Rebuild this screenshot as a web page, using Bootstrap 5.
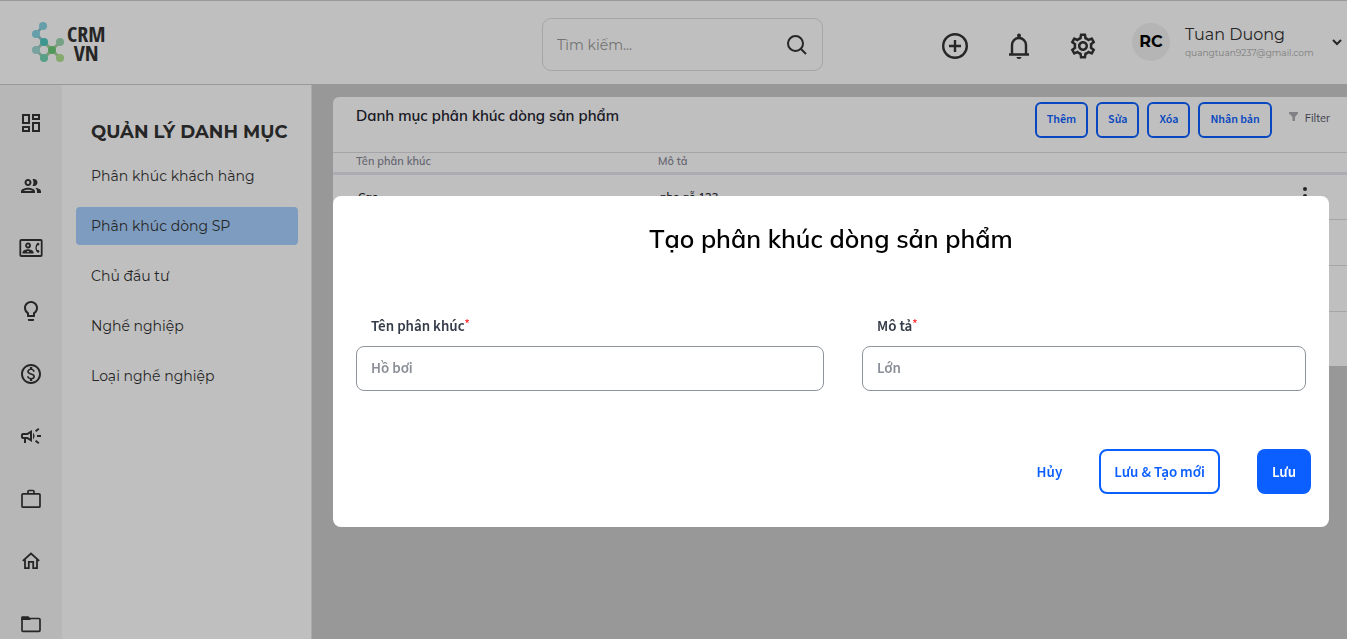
<!DOCTYPE html>
<html lang="vi">
<head>
<meta charset="utf-8">
<meta name="viewport" content="width=device-width, initial-scale=1">
<title>CRM VN</title>
<link href="https://cdn.jsdelivr.net/npm/bootstrap@5.3.0/dist/css/bootstrap.min.css" rel="stylesheet">
<style>
  :root { --ink: #333; --line: #dcdce0; --brand: #0b5fff; --wide: "Montserrat", "Inter", sans-serif; --round: "Mulish", "Nunito", "Open Sans", sans-serif; --form: "Source Sans Pro", "Source Sans 3", "Noto Sans CJK SC", "Noto Sans", sans-serif; }
  body { font-family: var(--wide); color: var(--ink); background: #cbcbcb; }
  svg { display: block; flex: none; }
  .icon-btn { padding: 0; border: 0; background: none; color: var(--ink); }

  /* Top bar */
  .topbar { display: grid; grid-template-columns: 542fr 281px 524fr; height: 85px; background: #fff; border-top: 1px solid #ccc; border-bottom: 1px solid #ccc; }
  .brand { padding: 0 0 2px 31px; gap: 2px; color: var(--ink); }
  .brand-name { font: 700 22px/19px "Open Sans Condensed", "Fira Sans Condensed", "Roboto Condensed", "Open Sans", sans-serif; text-align: center; padding-top: 2px; }
  .search { height: 53px; border: 1px solid #dedede; border-radius: 9px; padding: 0 15px 0 12px; }
  .search input { border: 0; background: none; width: 100%; min-width: 0; font: 14px var(--wide); outline: 0; }
  .search input::placeholder { color: #999; opacity: 1; }
  .tools { gap: 34px; padding: 0 4px 1px 0; }
  .tools > .icon-btn { padding-top: 8px; }
  .avatar { width: 38px; height: 38px; border-radius: 50%; background: #f2f2f2; color: #000; font-size: 16px; font-weight: 700; margin-right: 15px; }
  .who { width: 142px; }
  .who-name { font-size: 16px; line-height: 22px; }
  .who-mail { font-size: 9px; line-height: 14px; color: #a8a8a8; }

  /* Side navigation */
  .rail { width: 62px; background: #f4f4f4; padding: 26px 0 3px; }
  .rail a { color: var(--ink); }
  .submenu { width: 250px; background: #fff; border-right: 1px solid #e3e3e3; padding: 32px 13px 0 14px; }
  .submenu h2 { font-size: 18px; line-height: 30px; font-weight: 700; margin: 0 0 10px; padding-left: 15px; white-space: nowrap; }
  .submenu .nav { gap: 12px; }
  .submenu .nav-link { padding: 0 15px; font-size: 14px; line-height: 38px; color: var(--ink); border-radius: 4px; }
  .submenu .nav-link.active { background: #a9d1ff; }

  /* Segment list */
  .content { padding: 12px 0 0 21px; min-width: 0; }
  .panel { background: #fff; border-radius: 6px 0 0 0; }
  .panel-head { height: 56px; padding: 5px 17px 0 23px; border-bottom: 1px solid var(--line); }
  .panel-head h1 { font: 600 15px/28px var(--round); color: #22222e; margin: 0; }
  .btn-line { font: 600 12px/16px var(--form); color: var(--brand); border: 2px solid var(--brand); border-radius: 6px; padding: 8px 10px; }
  .filter { font: 11px/16px var(--round); color: #555566; padding: 8px 0 0; gap: 6px; margin-left: 8px; }
  .segments { --bs-table-bg: transparent; table-layout: fixed; margin: 0; font: 600 11px/16px var(--round); }
  .segments th { color: #8b8b9a; font-weight: 600; padding: 0 24px 3px 23px; border-bottom: 3px solid #e6e6ee; }
  .segments td { height: 46px; padding: 0 24px 0 25px; border-bottom: 1px solid var(--line); vertical-align: middle; color: #22222e; }
  .segments tr:last-child td { height: 54px; border: 0; }
  .segments .col-name { width: 302px; }
  .segments .col-menu { width: 52px; padding: 0; }

  /* Create dialog */
  .modal-backdrop { --bs-backdrop-opacity: .25; }
  .modal-dialog.create { max-width: none; margin: 196px 18px 0 333px; }
  .create .modal-content { border: 0; border-radius: 8px; font-family: var(--form); }
  .create .modal-title { font: 600 25px/34px var(--round); color: #000; padding-top: 26px; }
  .fields { display: grid; grid-template-columns: 468fr 444fr; gap: 38px; padding: 55px 23px 0; }
  .fields label { font-size: 15px; line-height: 24px; font-weight: 600; color: #343b48; padding-left: 15px; margin: 4px 0 7px; }
  .fields .req { color: #f33; font-size: 12px; line-height: 1; vertical-align: 4px; }
  .fields .form-control { height: 45px; border: 1px solid #8f949c; border-radius: 8px; padding: 0 14px; font-size: 15px; font-weight: 600; }
  .fields .form-control::placeholder { color: #8a8e96; opacity: 1; }
  .actions { gap: 37px; padding: 58px 18px 33px; }
  .actions .btn { font-size: 15px; line-height: 21px; font-weight: 600; border-radius: 8px; border: 2px solid transparent; padding: 11px 13px 9px; color: var(--brand); }
  .actions .btn-again { border-color: var(--brand); }
  .actions .btn-save { background: var(--brand); color: #fff; }
  .actions .btn-cancel { padding-left: 0; padding-right: 0; border-width: 2px 0; }
</style>
</head>
<body class="overflow-hidden">
<div class="d-flex flex-column vh-100">
  <header class="topbar">
    <a href="#" class="brand d-flex align-items-center text-decoration-none">
      <svg width="34" height="42" viewBox="31 21 34 42"><g stroke-width="2.600" fill="none"><path stroke="#8ebfc9" d="M43 26l-7 8 8 8"/><path stroke="#9ccbbd" d="M44 42l-8 8 8 8 8-8z"/><path stroke="#a7cf9d" d="M60 42l-8 8 8 8M44 58l8-8-8-8"/></g><circle cx="43" cy="26" r="4" fill="#87d5e3"/><circle cx="36" cy="34" r="4" fill="#87d5e3"/><circle cx="44" cy="42" r="4" fill="#52c9c1"/><circle cx="36" cy="50" r="4" fill="#9ed8d4"/><circle cx="44" cy="58" r="4" fill="#72d6b3"/><circle cx="52" cy="50" r="4" fill="#6ecb78"/><circle cx="60" cy="42" r="4" fill="#9dd8b3"/><circle cx="60" cy="58" r="4" fill="#b0e391"/></svg>
      <span class="brand-name">CRM<br>VN</span>
    </a>
    <form class="search d-flex align-items-center align-self-center mt-1" role="search">
      <input type="search" placeholder="Tìm kiếm..." aria-label="Tìm kiếm">
      <button class="icon-btn" type="button" aria-label="Tìm"><svg width="20" height="20" viewBox="0 0 20 20" fill="none" stroke="currentColor" stroke-width="2"><circle cx="8.500" cy="8.500" r="7.500"/><path d="M14 14l5 5"/></svg></button>
    </form>
    <div class="tools d-flex align-items-center justify-content-end">
      <button class="icon-btn" type="button" aria-label="Thêm mới"><svg width="30" height="30" viewBox="0 0 30 30" fill="none" stroke="currentColor" stroke-width="2.400"><circle cx="15" cy="15" r="11.800"/><path d="M15 9v12M9 15h12"/></svg></button>
      <button class="icon-btn" type="button" aria-label="Thông báo"><svg width="30" height="30" viewBox="0 0 30 30" fill="none" stroke="currentColor" stroke-width="2.400"><path d="M5 23.500h20M8 23V14a7 7 0 0114 0v9"/><path d="M12.500 26h5a2.500 2 0 01-5 0z" fill="currentColor" stroke="none"/><circle cx="15" cy="4.500" r="2" fill="currentColor" stroke="none"/></svg></button>
      <button class="icon-btn" type="button" aria-label="Cài đặt"><svg width="30" height="30" viewBox="0 0 24 24" fill="currentColor"><path d="M19.430 12.980c.04-.32.07-.64.07-.98 0-.34-.03-.66-.07-.98l2.110-1.650c.19-.15.24-.42.12-.64l-2-3.460c-.09-.16-.26-.25-.44-.25-.06 0-.12.01-.17.03l-2.490 1c-.52-.4-1.080-.73-1.690-.98l-.38-2.650C14.460 2.180 14.250 2 14 2h-4c-.25 0-.46.18-.49.42l-.38 2.650c-.61.25-1.170.59-1.690.98l-2.490-1c-.06-.02-.12-.03-.18-.03-.17 0-.34.09-.43.25l-2 3.460c-.13.22-.07.49.12.64l2.110 1.650c-.04.32-.07.65-.07.98 0 .33.03.66.07.98l-2.110 1.650c-.19.15-.24.42-.12.64l2 3.460c.09.16.26.25.44.25.06 0 .12-.01.17-.03l2.490-1c.52.4 1.080.73 1.690.98l.38 2.650c.03.24.24.42.49.42h4c.25 0 .46-.18.49-.42l.38-2.650c.61-.25 1.170-.59 1.690-.98l2.490 1c.06.02.12.03.18.03.17 0 .34-.09.43-.25l2-3.460c.12-.22.07-.49-.12-.64l-2.110-1.650zm-1.980-1.710c.04.31.05.52.05.73 0 .21-.02.43-.05.73l-.14 1.130.89.7 1.080.84-.7 1.210-1.270-.51-1.040-.42-.9.68c-.43.32-.84.56-1.250.73l-1.060.43-.16 1.130-.2 1.350h-1.400l-.19-1.350-.16-1.130-1.060-.43c-.43-.18-.83-.41-1.230-.71l-.91-.7-1.060.43-1.270.51-.7-1.210 1.080-.84.89-.7-.14-1.130c-.03-.31-.05-.54-.05-.74s.02-.43.05-.73l.14-1.130-.89-.7-1.080-.84.7-1.210 1.270.51 1.040.42.9-.68c.43-.32.84-.56 1.250-.73l1.060-.43.16-1.130.2-1.350h1.390l.19 1.350.16 1.130 1.060.43c.43.18.83.41 1.230.71l.91.7 1.060-.43 1.270-.51.7 1.210-1.070.85-.89.7.14 1.130zM12 8c-2.210 0-4 1.790-4 4s1.790 4 4 4 4-1.790 4-4-1.790-4-4-4zm0 6c-1.100 0-2-.9-2-2s.9-2 2-2 2 .9 2 2-.9 2-2 2z"/></svg></button>
      <button class="icon-btn d-flex align-items-center text-start pt-0" type="button" aria-label="Tài khoản">
        <span class="avatar d-flex align-items-center justify-content-center">RC</span>
        <span class="who"><span class="who-name d-block">Tuan Duong</span><span class="who-mail d-block">quangtuan9237@gmail.com</span></span>
        <svg class="ms-1" width="12" height="12" viewBox="0 0 12 12" fill="none" stroke="currentColor" stroke-width="2"><path d="M2 4l4 4 4-4"/></svg>
      </button>
    </div>
  </header>

  <div class="d-flex flex-grow-1">
    <nav class="rail d-flex flex-column align-items-center justify-content-between flex-shrink-0" aria-label="Chính">
      <a href="#" aria-label="Tổng quan"><svg width="24" height="24" viewBox="0 0 24 24" fill="currentColor"><path d="M19 5v2h-4V5h4M9 5v6H5V5h4m10 8v6h-4v-6h4M9 17v2H5v-2h4M21 3h-8v6h8V3zM11 3H3v10h8V3zm10 8h-8v10h8V11zm-10 4H3v6h8v-6z"/></svg></a>
      <a href="#" aria-label="Khách hàng"><svg width="24" height="24" viewBox="0 0 24 24" fill="currentColor"><path d="M9 13.750c-2.340 0-7 1.170-7 3.500V19h14v-1.750c0-2.330-4.660-3.500-7-3.500zM4.340 17c.84-.58 2.870-1.250 4.660-1.250s3.820.67 4.660 1.250H4.340zM9 12c1.930 0 3.500-1.570 3.500-3.500S10.930 5 9 5 5.500 6.570 5.500 8.500 7.070 12 9 12zm0-5c.83 0 1.500.67 1.500 1.500S9.830 10 9 10s-1.500-.67-1.500-1.500S8.170 7 9 7zm7.040 6.810c1.160.84 1.960 1.960 1.960 3.440V19h4v-1.750c0-2.020-3.500-3.170-5.960-3.440zM15 12c1.930 0 3.500-1.570 3.500-3.500S16.930 5 15 5c-.54 0-1.040.13-1.500.35.63.89 1 1.980 1 3.150s-.37 2.260-1 3.150c.46.22.96.35 1.500.35z"/></svg></a>
      <a href="#" aria-label="Liên hệ"><svg width="24" height="24" viewBox="0 0 24 24"><rect x="1.300" y="4" width="21.400" height="16" rx="1" fill="none" stroke="currentColor" stroke-width="1.800"/><circle cx="9" cy="9.500" r="2" fill="none" stroke="currentColor" stroke-width="1.800"/><path fill="currentColor" d="M3.500 17.500v-1.200c0-2 3.500-3.100 5.500-3.100s5.500 1.100 5.500 3.100v1.200z"/><path d="M8 15.700h2" stroke="#f4f4f4"/><path fill="currentColor" d="M18.300 14h1.300l1 1.500-1.500 1.500c-3.500-2.500-3.500-8 0-10.500l1.500 1.500-1 1.500h-1.300c-.7 1.500-.7 3 0 4.500z"/></svg></a>
      <a href="#" aria-label="Cơ hội"><svg width="24" height="24" viewBox="0 0 24 24" fill="currentColor"><path d="M9 21c0 .55.45 1 1 1h4c.55 0 1-.45 1-1v-1H9v1zm3-19C8.140 2 5 5.140 5 9c0 2.380 1.190 4.470 3 5.740V17c0 .55.45 1 1 1h6c.55 0 1-.45 1-1v-2.260c1.810-1.270 3-3.360 3-5.740 0-3.860-3.140-7-7-7zm2.850 11.100l-.85.6V16h-4v-2.300l-.85-.6A4.997 4.997 0 017 9c0-2.760 2.240-5 5-5s5 2.240 5 5c0 1.630-.8 3.160-2.150 4.100z"/></svg></a>
      <a href="#" aria-label="Doanh thu"><svg width="24" height="24" viewBox="0 0 24 24" fill="currentColor"><path d="M12 2C6.480 2 2 6.480 2 12s4.480 10 10 10 10-4.480 10-10S17.520 2 12 2zm0 18c-4.410 0-8-3.590-8-8s3.590-8 8-8 8 3.590 8 8-3.590 8-8 8zm.31-8.860c-1.770-.45-2.340-.94-2.340-1.670 0-.84.79-1.430 2.100-1.430 1.380 0 1.900.66 1.940 1.640h1.710c-.05-1.340-.87-2.570-2.490-2.970V5H10.900v1.690c-1.510.32-2.720 1.300-2.720 2.810 0 1.790 1.490 2.690 3.660 3.210 1.950.46 2.340 1.150 2.340 1.870 0 .53-.39 1.390-2.100 1.390-1.600 0-2.230-.72-2.320-1.640H8.040c.1 1.700 1.360 2.660 2.860 2.970V19h2.340v-1.670c1.520-.29 2.720-1.160 2.730-2.770-.01-2.200-1.900-2.960-3.660-3.420z"/></svg></a>
      <a href="#" aria-label="Chiến dịch"><svg width="24" height="24" viewBox="0 0 24 24" fill="currentColor"><path d="M18 11v2h4v-2h-4zM16 17.610c.96.71 2.210 1.650 3.200 2.390.4-.53.8-1.070 1.200-1.600-.99-.74-2.240-1.680-3.200-2.400-.4.54-.8 1.080-1.200 1.610zM20.400 5.600c-.4-.53-.8-1.070-1.200-1.600-.99.74-2.240 1.680-3.200 2.400.4.53.8 1.070 1.200 1.600.96-.72 2.210-1.650 3.200-2.400zM4 9c-1.100 0-2 .9-2 2v2c0 1.100.9 2 2 2h1v4h2v-4h1l5 3V6L8 9H4zm5.030 1.710L11 9.530v4.940l-1.970-1.180-.48-.29H4v-2h4.550l.48-.29zM15.500 12c0-1.330-.58-2.530-1.500-3.350v6.690c.92-.81 1.500-2.010 1.500-3.340z"/></svg></a>
      <a href="#" aria-label="Công việc"><svg width="24" height="24" viewBox="0 0 24 24" fill="none" stroke="currentColor" stroke-width="1.700"><rect x="3" y="6.800" width="18" height="13.400" rx="1"/><path d="M9 6.500V4.500q0-1 1-1h4q1 0 1 1v2"/></svg></a>
      <a href="#" aria-label="Dự án"><svg width="24" height="24" viewBox="0 0 24 24" fill="none" stroke="currentColor" stroke-width="1.800"><path d="M3.800 11.800L12 4.500l8.200 7.300M6 10.500v8.600h3.800v-6.300h4.400v6.300H18v-8.600"/></svg></a>
      <a href="#" aria-label="Tài liệu"><svg width="24" height="24" viewBox="0 0 24 24" fill="none" stroke="currentColor" stroke-width="1.700"><rect x="3" y="6.500" width="18" height="12.800" rx="1"/><path d="M2.200 8V5.300q0-1 1-1h6.300l2 2.500V8z" fill="currentColor" stroke="none"/></svg></a>
    </nav>

    <aside class="submenu flex-shrink-0">
      <h2>QUẢN LÝ DANH MỤC</h2>
      <nav class="nav flex-column">
        <a class="nav-link" href="#">Phân khúc khách hàng</a>
        <a class="nav-link active" href="#" aria-current="page">Phân khúc dòng SP</a>
        <a class="nav-link" href="#">Chủ đầu tư</a>
        <a class="nav-link" href="#">Nghề nghiệp</a>
        <a class="nav-link" href="#">Loại nghề nghiệp</a>
      </nav>
    </aside>

    <main class="content flex-grow-1">
      <section class="panel">
        <div class="panel-head d-flex align-items-start justify-content-between">
          <h1>Danh mục phân khúc dòng sản phẩm</h1>
          <div class="d-flex gap-2">
            <button class="btn btn-line" type="button">Thêm</button>
            <button class="btn btn-line" type="button">Sửa</button>
            <button class="btn btn-line" type="button">Xóa</button>
            <button class="btn btn-line" type="button">Nhân bản</button>
            <button class="icon-btn filter d-flex align-items-start" type="button"><svg width="11" height="14" viewBox="0 0 11 14" fill="#adadb3"><path d="M1 2h9v1.500L7 7v4H4.500V7L1 3.500z"/></svg>Filter</button>
          </div>
        </div>
        <table class="table segments">
          <thead><tr><th class="col-name">Tên phân khúc</th><th>Mô tả</th><th class="col-menu"></th></tr></thead>
          <tbody>
            <tr><td>Cao</td><td>nho gỗ 123</td><td class="col-menu"><button class="icon-btn" type="button" aria-label="Tùy chọn"><svg width="20" height="22" viewBox="0 0 20 22" fill="currentColor"><circle cx="10" cy="5" r="2"/><circle cx="10" cy="12" r="2"/><circle cx="10" cy="19" r="2"/></svg></button></td></tr>
            <tr><td></td><td></td><td></td></tr>
            <tr><td></td><td></td><td></td></tr>
            <tr><td></td><td></td><td></td></tr>
          </tbody>
        </table>
      </section>
    </main>
  </div>
</div>

<div class="modal-backdrop show"></div>
<div class="modal show d-block" role="dialog" aria-modal="true" aria-labelledby="createTitle">
  <div class="modal-dialog create">
    <form class="modal-content">
      <h2 class="modal-title text-center" id="createTitle">Tạo phân khúc dòng sản phẩm</h2>
      <div class="fields">
        <div><label for="segName">Tên phân khúc<span class="req">*</span></label><input class="form-control" id="segName" type="text" placeholder="Hồ bơi" required></div>
        <div><label for="segDesc">Mô tả<span class="req">*</span></label><input class="form-control" id="segDesc" type="text" placeholder="Lớn" required></div>
      </div>
      <div class="actions d-flex justify-content-end">
        <button class="btn btn-cancel" type="button">Hủy</button>
        <button class="btn btn-again" type="button">Lưu &amp; Tạo mới</button>
        <button class="btn btn-save" type="submit">Lưu</button>
      </div>
    </form>
  </div>
</div>
<script src="https://cdn.jsdelivr.net/npm/bootstrap@5.3.0/dist/js/bootstrap.bundle.min.js"></script>
</body>
</html>
